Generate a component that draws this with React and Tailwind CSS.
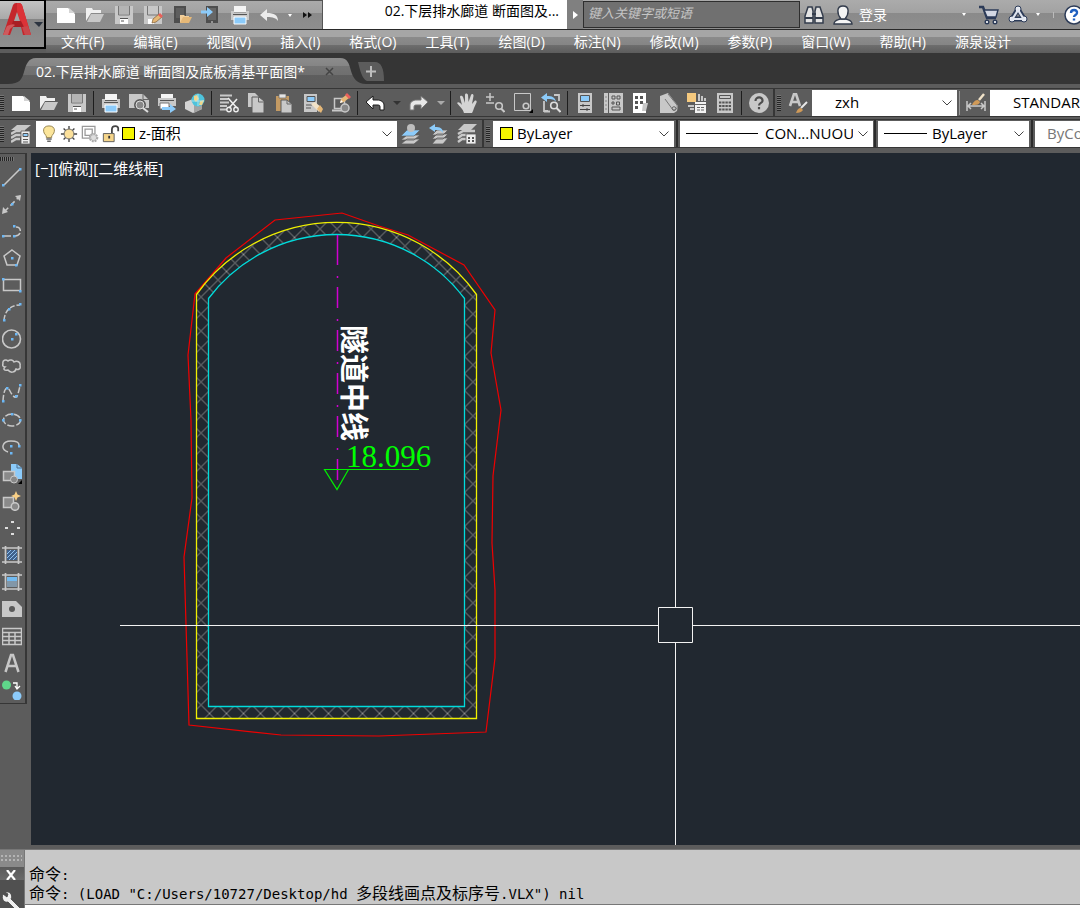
import React from 'react';

const GREY = '#c8c8c8';
const BLUE = '#8ccbfa';
const TAN = '#e6b877';

const menus = [
  '文件(F)', '编辑(E)', '视图(V)', '插入(I)', '格式(O)', '工具(T)', '绘图(D)',
  '标注(N)', '修改(M)', '参数(P)', '窗口(W)', '帮助(H)', '源泉设计',
];

/* ---------- icons, all on a 20 x 20 grid ---------- */

const icons = {
  newFile: (
    <>
      <path d="M1 3h11l7 6v9H1z" fill="#fff" />
      <path d="M13 3l6 5h-6z" fill="#d4d4d4" />
    </>
  ),
  open: (
    <>
      <path d="M1 16V3h6l1 2h8v3H6z" fill="#f0f0f0" />
      <path d="M2 17l4-8h13l-4 8z" fill={GREY} />
    </>
  ),
  save: (
    <>
      <path d="M1 1h18v18H1z" fill={GREY} />
      <path d="M5 1h10v8H5z" fill="#b4b4b4" />
      <path d="M4.500 1v9h11V1" stroke="#777" />
      <path d="M6 14h8v5H6z" fill="#fff" />
      <path d="M6 13.500h8M7 16h3" stroke="#555" />
    </>
  ),
  saveAs: (
    <>
      <path d="M1 1h18v18H1z" fill={GREY} />
      <path d="M4.500 1v9h11V1" stroke="#777" />
      <path d="M5 14h6v5H5z" fill="#fff" />
      <path d="M9 18l1-4 6-5 3 3-6 5z" fill={TAN} stroke="#805c30" strokeWidth=".7" />
      <path d="M15 10l2-2 3 3-2 2z" fill="#e8605c" />
    </>
  ),
  bookOpen: (
    <>
      <path d="M2 1h12v17H2z" fill="#4e4e4e" />
      <path d="M4 3h8v10H4z" fill="#5e5e5e" />
      <path d="M8 18V10h4l1 1h4v2z" fill="#f3cf9a" />
      <path d="M8 18l3-6h9l-3 6z" fill={TAN} />
    </>
  ),
  tablet: (
    <>
      <path d="M5 1h12v17H5z" fill="#4e4e4e" />
      <path d="M7 3h8v12H7z" fill="#666" />
      <path d="M0 5.500h6V2l6 5-6 5V8.500H0z" fill={BLUE} />
      <path d="M10 17h2" stroke="#ddd" />
    </>
  ),
  print: (
    <>
      <path d="M4 1h12v6H4z" fill="#f4f4f4" />
      <path d="M1 6h3v2h12V6h3v9H1z" fill={GREY} />
      <path d="M3 9.500h14" stroke="#555" />
      <path d="M4 12h12v7H4z" fill={BLUE} stroke="#fff" />
    </>
  ),
  undoBar: <path d="M1 10l7-6v4c7 0 11 2 11 8-2-3-5-4-11-4v4z" fill="#ececec" />,
  preview: (
    <>
      <path d="M0 1h14l6 6v8H0z" fill={GREY} />
      <path d="M14 1v5.500h6" stroke="#666" />
      <circle cx="11" cy="12" r="5" fill="#888" stroke="#5a5a5a" strokeWidth="2" />
      <circle cx="11" cy="12" r="4" stroke="#ddd" />
      <path d="M14 15l5 4" stroke="#ddd" strokeWidth="2" />
    </>
  ),
  publish: (
    <>
      <path d="M4 1h12v4H4z" fill="#f4f4f4" />
      <path d="M1 5h18v8H1z" fill={GREY} />
      <path d="M3 7.500h14" stroke="#555" />
      <path d="M3 10h9v6H3z" fill="#fff" stroke="#777" />
      <path d="M5 14h8v-3l6 5-6 4v-3H5z" fill={BLUE} />
    </>
  ),
  globe: (
    <>
      <path d="M0 9l8-3 9 5v5l-9 4-8-4z" fill="#d4d4d4" />
      <path d="M9 11l8-2v7l-8 4z" fill="#a2a2a2" />
      <circle cx="13" cy="7" r="6.500" fill="#4ec3dc" />
      <path d="M9 3l3-1 2 4-3 3-2-2zM15 8l4-1-2 5-3 0z" fill="#f0d58a" />
      <path d="M7 8h12M13 1v12" stroke="#bdeaf2" strokeWidth=".8" />
    </>
  ),
  cut: (
    <>
      <path d="M1 2.500h12M1 6h8M1 9.500h9M1 13h7M1 16.500h7" stroke={GREY} strokeWidth="2" />
      <path d="M9 5l9 10M18 6l-8 9" stroke="#eee" strokeWidth="1.600" />
      <circle cx="10" cy="16.500" r="2.200" stroke="#eee" strokeWidth="1.400" />
      <circle cx="17" cy="16.500" r="2.200" stroke="#eee" strokeWidth="1.400" />
    </>
  ),
  copy: (
    <>
      <path d="M1 0h7l4 4v10H1z" fill={GREY} />
      <path d="M5 4h7l5 4v12H5z" fill={GREY} stroke="#5a5a5a" />
      <path d="M11.500 4v5h5" stroke="#666" />
    </>
  ),
  paste: (
    <>
      <path d="M1 3h13v15H1z" fill="#c39a63" />
      <path d="M4 1h7v4H4z" fill="#e4e4e4" stroke="#666" strokeWidth=".7" />
      <path d="M6 7h6l5 4v9H6z" fill={GREY} stroke="#5a5a5a" />
      <path d="M12 7v4h4" stroke="#666" />
    </>
  ),
  match: (
    <>
      <path d="M1 1h13v18H1z" fill={GREY} />
      <path d="M4 3.500h8v5H4z" fill={BLUE} stroke="#555" />
      <path d="M3 12h6M3 15h5" stroke="#555" />
      <path d="M8 11l4-2 7 6-3 4z" fill="#f1e2c8" />
      <path d="M14 16l3-4 3 4-2 4z" fill={TAN} />
    </>
  ),
  blockEdit: (
    <>
      <path d="M3.500 5.500h10v10h-10z" stroke={GREY} strokeWidth="1.500" />
      <path d="M1 17.500h12" stroke={GREY} strokeWidth="2" />
      <circle cx="14" cy="15" r="4" fill="#888" stroke={GREY} strokeWidth="1.500" />
      <path d="M9 10l1-4 5-4 3 3-5 4z" fill={TAN} />
      <path d="M14 2l2-2 4 4-2 2z" fill="#e8605c" />
      <path d="M9 10l1-3 2 2z" fill="#fff" />
    </>
  ),
  undo: <path d="M1 9l7-6v4h4c4 0 7 2 7 5v5h-4v-3c0-2-1-2-3-2H8v4z" fill="#fff" stroke="#1c1c1c" />,
  redo: <path d="M19 9l-7-6v4H8c-4 0-7 2-7 5v5h4v-3c0-2 1-2 3-2h4v4z" fill="#e8e8e8" stroke="#777" />,
  hand: (
    <path
      d="M7 20c-1-4-4-6-7-10 1-1.500 3-1 5 2L3 4c0-1.500 2-2 3 0l2 6V2c0-2 2.500-2 3 0l.5 7L14 2c.6-1.600 2.800-1 2.500 1L15 11l2.500-3c1-1 2.800 0 2 1.500L17 15c-.5 2-1 3-2 5z"
      fill="#d4d4d4"
    />
  ),
  zoomRt: (
    <>
      <path d="M5 0v8M1 4h8M1 10h8" stroke={GREY} strokeWidth="1.500" />
      <circle cx="14" cy="13" r="3.300" stroke={GREY} strokeWidth="1.600" />
      <path d="M16 15.500l3.500 3.500" stroke={GREY} strokeWidth="2" />
    </>
  ),
  zoomWin: (
    <>
      <path d="M1.500.5h16v17h-16z" stroke={GREY} />
      <circle cx="13" cy="13" r="2.800" fill="#5a5a5a" stroke={GREY} strokeWidth="1.600" />
      <path d="M20 16v4h-4z" fill="#000" />
    </>
  ),
  zoomPrev: (
    <>
      <path d="M3 8v10h4M13 2h5v6M3 18.500h6" stroke={GREY} strokeWidth="1.800" />
      <path d="M0 4.500L6 0v3c5 0 8 1 9 6-2-3-4-3-9-3v3z" fill={BLUE} />
      <circle cx="13" cy="12.500" r="3.300" stroke="#ddd" strokeWidth="1.600" />
      <path d="M15.500 15l4 4" stroke="#ddd" strokeWidth="2" />
    </>
  ),
  props: (
    <>
      <path d="M3 0h14v20H3z" fill={GREY} />
      <path d="M5.500 2.500h9v6h-9z" fill={BLUE} stroke="#555" />
      <path d="M5 12.500h10M5 16.500h10M8 11v3M12 15v3" stroke="#444" />
    </>
  ),
  design: (
    <>
      <path d="M1 0h4v20H1zM6 0h14v20H6z" fill={GREY} />
      <path d="M9 3h3v3H9zM14 3h3v3h-3zM9 9h2v2H9zM13.500 9h3v3h-3zM9 14h8v3H9z" stroke="#555" />
      <path d="M3 3v14" stroke="#888" strokeDasharray="2 2" />
    </>
  ),
  palette: (
    <>
      <path d="M2 0h13v20H2z" fill="#fff" />
      <path d="M4 3h3v3H4zM9 3h3v3H9zM4 8h3v3H4zM9 8h3v3H9zM4 13h3v3H4z" fill="#555" />
      <path d="M11 18l1-8h5l-2 8z" fill={GREY} />
    </>
  ),
  sheets: (
    <>
      <path d="M1 3l8-3 10 13-1 5-3 2H1z" fill={GREY} />
      <path d="M9 1l9 11c1 3-1 6-4 5L6 6" stroke="#777" />
      <circle cx="15" cy="15.500" r="1.800" stroke="#666" />
    </>
  ),
  markup: (
    <>
      <path d="M0 0h9v9H0z" fill="#f5c97e" />
      <path d="M12 8V1M15 8V3M18 8V5" stroke={GREY} strokeWidth="2" />
      <path d="M1 13h6M3 16h4" stroke={GREY} strokeWidth="2" />
      <path d="M8 9h11v11H8z" fill="#f2f2f2" />
      <path d="M8 11.500h11M10 14.500h3M14 14.500h3M10 17h3M14 17h3" stroke="#666" />
    </>
  ),
  calc: (
    <>
      <path d="M2 0h16v20H2z" fill={GREY} />
      <path d="M4.500 2.500h11v3h-11z" stroke="#555" />
      <path d="M4 9.500h12M4 13h12M4 16.500h12" stroke="#555" strokeWidth="2" strokeDasharray="2.400 .8" />
    </>
  ),
  help: (
    <>
      <circle cx="10" cy="10" r="10" fill={GREY} />
      <path d="M6.500 8c0-5 7.500-4.500 7 0-.2 2-3.500 2-3.500 4.500M10 14v2.200" stroke="#4e4e4e" strokeWidth="2.200" />
    </>
  ),
  textStyle: (
    <>
      <path d="M2 13L6 1h2l4 12M3.500 9h7" stroke={GREY} strokeWidth="2.600" />
      <path d="M13 15l6-6" stroke="#e8e8e8" strokeWidth="2" />
      <path d="M8 20c1-3 2-5 5-5l2 2c-1 2-4 3-7 3z" fill="#d09a58" />
    </>
  ),
  dimStyle: (
    <>
      <path d="M1 8v10M19 8v10M2 13h16M5 10l-3 3 3 3M15 10l3 3-3 3" stroke={GREY} strokeWidth="1.500" />
      <path d="M13 7l5-6" stroke="#f0e2c8" strokeWidth="2.500" />
      <path d="M6 12c1-3 3-5 6-5l2 2c-1 3-4 3-8 3z" fill="#d09a58" />
    </>
  ),
  layerProps: (
    <>
      <path d="M6 1h14l-6 5H0z" fill={GREY} />
      <path d="M0 10l5-3h9M0 14l5-3h5M0 18l5-3h4" stroke={GREY} strokeWidth="2.400" />
      <path d="M10 7h9v13h-9z" fill="#eee" stroke="#5c5c5c" strokeWidth=".8" />
      <path d="M12 9.500h5v3h-5z" fill={BLUE} stroke="#555" />
      <path d="M12 15.500h5M12 18h5" stroke="#555" />
    </>
  ),
  layerCur: (
    <>
      <path d="M6 11h13l-6 5H0zM6 15h13l-6 5H0z" fill={GREY} stroke="#5a5a5a" strokeWidth=".8" />
      <path d="M6 6h13l-6 6H0z" fill={BLUE} stroke="#5a5a5a" strokeWidth=".6" />
      <circle cx="10" cy="4" r="4" fill="#bdbdbd" />
    </>
  ),
  layerPrev: (
    <>
      <path d="M8 6h11l-5 5H3zM8 10h11l-5 5H3zM8 14h11l-5 6H3z" fill={GREY} stroke="#5a5a5a" strokeWidth=".8" />
      <path d="M0 4l6-4v3c5 0 8 1 8 6-2-3-4-3-8-3v2z" fill={BLUE} />
    </>
  ),
  layerState: (
    <>
      <path d="M7 0h13l-6 6H1z" fill={GREY} />
      <path d="M1 10l5-3h12M1 14l4-3h6M1 18l4-3h4" stroke={GREY} strokeWidth="2.400" />
      <path d="M9 10h10v10H9z" fill="#eee" stroke="#5c5c5c" strokeWidth=".8" />
      <path d="M11 14h2M15 14h2M11 17h2M15 17h2" stroke="#555" strokeWidth="2" />
    </>
  ),
  bulb: (
    <>
      <path d="M10 1c8 0 7 8 3 11v2H7v-2C3 9 2 1 10 1z" fill="#fbe59b" stroke="#8d7a45" />
      <path d="M7 15.500h6M8 18h4" stroke="#666" strokeWidth="1.800" />
    </>
  ),
  sun: (
    <>
      <path d="M10 1v18M1 10h18M4 4l12 12M16 4L4 16" stroke="#444" strokeWidth="1.500" />
      <circle cx="10" cy="10" r="5.500" fill="#fbe09b" stroke="#666" />
    </>
  ),
  vpFreeze: (
    <>
      <path d="M1.500 1.500h14v13h-14zM4.500 4.500h8v7h-8z" stroke="#999" strokeWidth="1.400" />
      <circle cx="14" cy="14" r="4" fill="#ddd" stroke="#aaa" strokeWidth="2.500" strokeDasharray="2 1" />
    </>
  ),
  lock: (
    <>
      <path d="M11 9V5c0-5 8-5 7 0v2" stroke="#444" strokeWidth="2" />
      <path d="M1.500 9.500h12v9h-12z" fill="#f5d58a" stroke="#555" />
      <path d="M8 12v3" stroke="#333" strokeWidth="2" />
    </>
  ),
  binoculars: (
    <>
      <path d="M4 2h4l1 4v12H1v-7zM12 2h4l3 9v7h-8V6z" fill="#e4e4e4" stroke="#333c4c" strokeWidth="1.500" />
      <path d="M8 9h4M1 13h8M11 13h8" stroke="#333c4c" strokeWidth="1.800" />
    </>
  ),
  user: (
    <>
      <path d="M1 19c0-4 4-4 6-5h6c2 1 6 1 6 5z" fill="#f4f4f4" stroke="#333c4c" strokeWidth="1.400" />
      <path d="M10 1c7 0 6 8 2 13h-4C4 9 3 1 10 1z" fill="#f4f4f4" stroke="#333c4c" strokeWidth="1.400" />
    </>
  ),
  cart: (
    <>
      <path d="M0 2h4l4 11h9" stroke="#2c3b58" strokeWidth="2.500" />
      <path d="M5 5h14l-2 7H8z" fill="#d4d8e4" stroke="#2c3b58" strokeWidth="1.400" />
      <circle cx="8" cy="17" r="1.800" fill="#fff" stroke="#2c3b58" strokeWidth="1.400" />
      <circle cx="16" cy="17" r="1.800" fill="#fff" stroke="#2c3b58" strokeWidth="1.400" />
    </>
  ),
  triangle: (
    <>
      <path d="M10 4l6 10H4z" stroke="#2c3b58" strokeWidth="5" strokeLinejoin="round" />
      <circle cx="10" cy="4" r="3" fill="#e8ebf2" stroke="#2c3b58" />
      <circle cx="4" cy="14" r="3" fill="#e8ebf2" stroke="#2c3b58" />
      <circle cx="16" cy="14" r="3" fill="#e8ebf2" stroke="#2c3b58" />
      <path d="M10 5l5.500 9h-11z" stroke="#dfe4ee" strokeWidth="2.200" />
    </>
  ),
  helpBlue: (
    <>
      <circle cx="10" cy="10" r="9" fill="#fff" stroke="#2d3c58" strokeWidth="1.500" />
      <path d="M7 8c0-4 6.500-4 6 0-.2 2-3 2-3 4M10 13.500v2" stroke="#1f5fc0" strokeWidth="2.400" />
    </>
  ),
  wrench: (
    <path
      d="M2 2l4 3 1-3-3-2c5-1 8 3 6 7l9 9-3 3-9-9C3 11 0 7 2 2z"
      fill="#f0f0f0"
      stroke="#444"
      strokeWidth=".8"
    />
  ),
};

// little blue grip squares that mark the pick points of a draw tool
const Dots = ({ at }) => at.map(([x, y]) => (
  <rect key={`${x}-${y}`} x={x - 1} y={y - 1} width="2.500" height="2.500" fill="#6db8f5" />
));

const drawTools = [
  ['直线', <><path d="M2 18L18 2" stroke={GREY} strokeWidth="1.600" /><Dots at={[[1, 18], [18, 2]]} /></>],
  ['构造线', <><path d="M2 18L18 2" stroke={GREY} strokeWidth="1.500" strokeDasharray="6 3" /><path d="M0 20l1-7 5 5zM19 1l-1 6-5-5z" fill={GREY} /><Dots at={[[10, 10]]} /></>],
  ['多段线', <><path d="M1 15h12c7 0 7-9 1-9" stroke={GREY} strokeWidth="1.500" strokeDasharray="8 2" /><Dots at={[[1, 15], [12, 15], [12, 5]]} /></>],
  ['多边形', <><path d="M10 2l8 6-3 9H5L2 8z" stroke={GREY} strokeWidth="1.500" /><Dots at={[[10, 10], [14, 17]]} /></>],
  ['矩形', <><path d="M1.500 4.500h17v11h-17z" stroke={GREY} strokeWidth="1.500" /><Dots at={[[1, 4], [18, 16]]} /></>],
  ['圆弧', <><path d="M2 18C3 9 8 3 18 3" stroke={GREY} strokeWidth="1.500" strokeDasharray="5 2" /><Dots at={[[2, 18], [7, 7], [18, 2]]} /></>],
  ['圆', <><circle cx="9.500" cy="10" r="9" stroke={GREY} strokeWidth="1.600" /><Dots at={[[10, 10], [14, 5]]} /></>],
  ['修订云线', <path d="M1 8c-1-4 3-5 5-3 2-2 5-1 6 1 3-2 7 0 6 4 1 3-2 4-4 3-1 4-6 4-8 1-4 1-5-1-3-3-2 0-3-2-2-3z" stroke={GREY} strokeWidth="1.500" />],
  ['样条曲线', <><path d="M1 18C2 2 6 4 8 8s6 10 8 3l2-8" stroke={GREY} strokeWidth="1.500" strokeDasharray="6 2" /><Dots at={[[1, 18], [5, 5], [14, 13], [18, 2]]} /></>],
  ['椭圆', <><ellipse cx="10" cy="10" rx="8.500" ry="6" stroke={GREY} strokeWidth="1.500" strokeDasharray="7 2" /><Dots at={[[1, 10], [10, 4], [18, 10]]} /></>],
  ['椭圆弧', <><path d="M6 15C-2 12 0 4 9 4c6 0 8 2 8 4" stroke={GREY} strokeWidth="1.500" /><Dots at={[[9, 9], [17, 9], [9, 16]]} /></>],
  ['插入块', <><path d="M9 0h6l5 4v11H9z" fill={BLUE} /><path d="M15 0v4h5" stroke="#4a6f90" /><path d="M1.500 7.500h11v9h-11z" fill="#8a8a8a" stroke={GREY} strokeWidth="1.500" /><circle cx="12" cy="15.500" r="3.500" fill="#888" stroke={GREY} /><path d="M20 16v4h-4z" fill="#000" /></>],
  ['创建块', <><path d="M1.500 6.500h10v10h-10z" fill="#8a8a8a" stroke={GREY} strokeWidth="1.500" /><circle cx="13" cy="15.500" r="3.800" fill="#888" stroke={GREY} strokeWidth="1.500" /><path d="M14 0l1.500 3.500L19 5l-3.500 1.500L14 10l-1.500-3.500L9 5l3.500-1.500z" fill="#f8cf86" /></>],
  ['点', <path d="M9 3h3v2H9zM3 9h3v2H3zM15 9h3v2h-3zM9 15h3v2H9z" fill="#dedede" />],
  ['图案填充', <><path d="M5 5h10v10H5z" fill="#3f618c" /><path d="M5 9l4-4M5 13l8-8M7 15l8-8M11 15l4-4" stroke="#8fc0ee" /><path d="M3.500 1v18M16.500 1v18M0 3h20M0 17h20" stroke={GREY} strokeWidth="1.700" /></>],
  ['渐变色', <><path d="M5 5h10v5H5z" fill="#72baf0" /><path d="M5 9h10v6H5z" fill="#8297a8" /><path d="M3.500 1v18M16.500 1v18M0 3h20M0 17h20" stroke={GREY} strokeWidth="1.700" /></>],
  ['面域', <><path d="M0 2h14l6 6v10H0z" fill={GREY} /><circle cx="10" cy="10" r="3" fill="#5a5a5a" /></>],
  ['表格', <><path d="M.5 2.500h19v16H.5z" stroke={GREY} strokeWidth="1.500" /><path d="M0 6.500h20M0 10.500h20M0 14.500h20M7 7v12M13 7v12" stroke={GREY} strokeWidth="1.500" /></>],
  ['多行文字', <path d="M3.500 19L9 2h2l5.500 17M6 13h8" stroke={GREY} strokeWidth="2.500" />],
  ['添加选定对象', <><circle cx="4.500" cy="5" r="4.500" fill="#5fd68a" /><circle cx="15" cy="16" r="4.500" fill={BLUE} /><path d="M11 3h4v5M13 6l2 3 3-3" stroke="#fff" strokeWidth="1.300" /></>],
];

const Icon = ({ name, children, className = 'w-5 h-5' }) => (
  <svg viewBox="0 0 20 20" fill="none" aria-hidden="true" className={`${className} shrink-0`}>
    {name ? icons[name] : children}
  </svg>
);

const ToolButton = ({ name, label }) => (
  <button type="button" aria-label={label} className="w-7 h-full shrink-0 flex items-center justify-center hover:bg-white/10">
    <Icon name={name} />
  </button>
);

const Sep = () => <div className="w-px h-6 mx-[2px] mr-[3px] shrink-0 bg-[#1d1d1d]" />;

const Caret = ({ dark, label }) => (
  <button type="button" aria-label={label} className="w-4 h-full shrink-0 flex items-center justify-center">
    <svg viewBox="0 0 8 4" className="w-2 h-1"><path d="M0 0h8L4 4z" fill={dark ? '#333' : '#aaa'} /></svg>
  </button>
);

const Grip = () => (
  <div className="w-1 h-4 shrink-0 bg-[repeating-linear-gradient(0deg,#242424_0,#242424_1px,#757575_1px,#757575_2px)]" />
);

const Combo = ({ label, value, className, selectClass = '', children }) => (
  <div className={`flex items-center h-[26px] shrink-0 bg-white text-black relative overflow-hidden ${className}`}>
    {children}
    <select aria-label={label} className={`appearance-none flex-1 min-w-0 h-full bg-transparent pr-5 text-[15px] outline-none ${selectClass}`}>
      <option>{value}</option>
    </select>
    <svg viewBox="0 0 10 6" className="absolute right-[5px] top-[10px] w-[10px] h-[6px] pointer-events-none">
      <path d="M.5.5L5 5 9.500.5" fill="none" stroke="#444" />
    </svg>
  </div>
);

function AppButton() {
  return (
    <button
      type="button"
      aria-label="应用程序菜单"
      className="w-[46px] h-[49px] shrink-0 relative border-t border-r-2 border-b-2 border-black bg-[linear-gradient(#c4c4c4_0,#a8a8a8_40%,#858585_40%,#8f8f8f_100%)]"
    >
      <svg viewBox="0 0 44 46" className="w-full h-full">
        <path d="M13 4q1-2 3-2h3q2 0 3 2l9 30h-8l-2-8h-8l-3 8H3z" fill="#c4262c" />
        <path d="M17 2h2q2 0 3 2l9 30h-6L17 10z" fill="#dc3237" />
        <path d="M17 11l3 9h-6z" fill="#a6a6a6" />
        <path d="M13 20h8l3 6H11z" fill="#a81e24" />
        <path d="M3 34l4-9q6-3 8-1l-5 4-2 6z" fill="#cf5a5d" />
        <path d="M31 34l-3-9-6 1 3 8z" fill="#c9474b" />
        <path d="M34 21h9l-4 5z" fill="#2c3440" />
      </svg>
    </button>
  );
}

function TitleBar() {
  const quick = [
    ['newFile', '新建'], ['open', '打开'], ['save', '保存'], ['saveAs', '另存为'],
    ['bookOpen', '从移动设备打开'], ['tablet', '保存到移动设备'], ['print', '打印'], ['undoBar', '放弃'],
  ];
  return (
    <div className="flex h-[29px] bg-[linear-gradient(#ababab_0,#a2a2a2_13px,#8a8a8a_13px,#8e8e8e_100%)]">
      <div className="w-[277px] shrink-0 flex items-center gap-[9px] pl-[10px] border-t border-r border-[#555]">
        {quick.map(([name, label]) => (
          <button key={name} type="button" aria-label={label}><Icon name={name} /></button>
        ))}
        <svg viewBox="0 0 4 3" className="w-1 h-[3px]"><path d="M0 0h4L2 3z" fill="#fff" /></svg>
        <svg viewBox="0 0 9 6" className="w-[9px] h-[6px] ml-[2px]"><path d="M0 0l4 3-4 3zM5 0l4 3-4 3z" fill="#111" /></svg>
      </div>
      <div className="w-[244px] shrink-0 bg-white text-black text-[14px] leading-[22px] text-right pr-2 whitespace-nowrap overflow-hidden">
        02.下层排水廊道 断面图及...
      </div>
      <button type="button" aria-label="展开搜索" className="w-4 shrink-0 flex items-center justify-center bg-[#808080]">
        <svg viewBox="0 0 5 8" className="w-[5px] h-2"><path d="M0 0l5 4-5 4z" fill="#fff" /></svg>
      </button>
      <input
        type="text"
        aria-label="搜索"
        placeholder="键入关键字或短语"
        className="w-[217px] h-[27px] mt-px shrink-0 px-1 pb-1 text-[13px] italic bg-[#707070] border border-[#2e2e2e] text-white placeholder:text-[#c4c4c4] outline-none"
      />
      <div className="flex-1 min-w-0 flex items-center overflow-hidden">
        <button type="button" aria-label="搜索按钮" className="ml-1"><Icon name="binoculars" /></button>
        <button type="button" className="ml-[9px] flex items-center gap-[6px] text-[14px] text-white whitespace-nowrap">
          <Icon name="user" />登录
        </button>
        <svg viewBox="0 0 4 3" className="w-1 h-[3px] ml-[75px] shrink-0"><path d="M0 0h4L2 3z" fill="#fff" /></svg>
        <button type="button" aria-label="商店" className="ml-[13px]"><Icon name="cart" /></button>
        <button type="button" aria-label="联机" className="ml-[9px]"><Icon name="triangle" /></button>
        <svg viewBox="0 0 4 3" className="w-1 h-[3px] ml-2 shrink-0"><path d="M0 0h4L2 3z" fill="#fff" /></svg>
        <div className="w-px h-[6px] ml-[13px] shrink-0 bg-[#bbb]" />
        <button type="button" aria-label="帮助" className="ml-[10px] shrink-0"><Icon name="helpBlue" /></button>
      </div>
    </div>
  );
}

function MenuBar() {
  return (
    <nav className="h-6 flex items-center gap-[29px] pl-[15px] border-t border-[#2a2a2a] text-[14px] text-white whitespace-nowrap overflow-hidden bg-[linear-gradient(#a6a6a6_0,#a6a6a6_7px,#8b8b8b_7px,#858585_15px,#6e6e6e_15px,#5c5c5c_100%)]">
      {menus.map((m) => <button key={m} type="button">{m}</button>)}
    </nav>
  );
}

const TabFill = ({ id }) => (
  <linearGradient id={id} x1="0" y1="0" x2="0" y2="26" gradientUnits="userSpaceOnUse">
    <stop offset="0" stopColor="#8c8c8c" />
    <stop offset=".3" stopColor="#858585" />
    <stop offset=".3" stopColor="#757575" />
    <stop offset=".65" stopColor="#6f6f6f" />
    <stop offset=".65" stopColor="#5e5e5e" />
    <stop offset="1" stopColor="#5c5c5c" />
  </linearGradient>
);

function FileTabs() {
  return (
    <div className="h-[31px] flex items-end bg-[#353535] pl-2 overflow-hidden">
      <svg viewBox="0 0 28 26" className="w-7 h-[26px] shrink-0">
        <defs><TabFill id="tabLeft" /></defs>
        <path d="M0 26C12 26 14 21 16 14S20 0 28 0v26z" fill="url(#tabLeft)" />
      </svg>
      <div className="h-[26px] w-[304px] shrink-0 flex items-center justify-between text-[14px] text-white whitespace-nowrap bg-[linear-gradient(#8c8c8c_0,#858585_30%,#757575_30%,#6f6f6f_65%,#5e5e5e_65%,#5c5c5c_100%)]">
        <span>02.下层排水廊道 断面图及底板清基平面图*</span>
        <button type="button" aria-label="关闭" className="mr-[6px]">
          <svg viewBox="0 0 9 9" className="w-[9px] h-[9px]"><path d="M1 1l7 7M8 1L1 8" stroke="#444" strokeWidth="1.500" /></svg>
        </button>
      </div>
      <svg viewBox="0 0 26 26" className="w-[26px] h-[26px] shrink-0">
        <defs><TabFill id="tabRight" /></defs>
        <path d="M0 0c8 0 9 6 11 13s6 13 15 13H0z" fill="url(#tabRight)" />
      </svg>
      <button type="button" aria-label="新图形" className="-ml-2 mb-[3px] shrink-0">
        <svg viewBox="0 0 26 19" className="w-[26px] h-[19px]">
          <path d="M0 0h17c6 0 9 6 9 19H9C4 17 2 8 0 0z" fill="#5c5c5c" />
          <path d="M13 4v11M8 9.500h10" stroke="#bdbdbd" strokeWidth="2" />
        </svg>
      </button>
    </div>
  );
}

function StandardToolbar() {
  return (
    <div className="h-[29px] flex items-center border-y border-[#363636] overflow-hidden">
      <Grip />
      <div className="w-[3px] shrink-0" />
      <ToolButton name="newFile" label="新建" />
      <ToolButton name="open" label="打开" />
      <ToolButton name="save" label="保存" />
      <Sep />
      <ToolButton name="print" label="打印" />
      <ToolButton name="preview" label="打印预览" />
      <ToolButton name="publish" label="发布" />
      <ToolButton name="globe" label="三维打印" />
      <Sep />
      <ToolButton name="cut" label="剪切" />
      <ToolButton name="copy" label="复制" />
      <ToolButton name="paste" label="粘贴" />
      <ToolButton name="match" label="特性匹配" />
      <ToolButton name="blockEdit" label="块编辑器" />
      <Sep />
      <ToolButton name="undo" label="放弃" />
      <Caret dark label="放弃列表" />
      <ToolButton name="redo" label="重做" />
      <Caret label="重做列表" />
      <div className="w-px h-6 ml-px mr-[2px] shrink-0 bg-[#1d1d1d]" />
      <ToolButton name="hand" label="实时平移" />
      <ToolButton name="zoomRt" label="实时缩放" />
      <ToolButton name="zoomWin" label="窗口缩放" />
      <ToolButton name="zoomPrev" label="缩放上一个" />
      <Sep />
      <ToolButton name="props" label="特性" />
      <ToolButton name="design" label="设计中心" />
      <ToolButton name="palette" label="工具选项板" />
      <ToolButton name="sheets" label="图纸集管理器" />
      <ToolButton name="markup" label="标记集管理器" />
      <ToolButton name="calc" label="快速计算器" />
      <Sep />
      <ToolButton name="help" label="帮助" />
      <div className="w-[2px] h-full mr-[2px] shrink-0 bg-[#363636]" />
      <Grip />
      <div className="w-[3px] shrink-0" />
      <ToolButton name="textStyle" label="文字样式" />
      <Combo label="文字样式控制" value="zxh" className="w-[145px]" selectClass="pl-[23px]" />
      <div className="w-px h-6 mx-[2px] shrink-0 bg-[#999]" />
      <ToolButton name="dimStyle" label="标注样式" />
      <Combo label="标注样式控制" value="STANDARD" className="w-[180px]" selectClass="pl-[23px]" />
    </div>
  );
}

function LayerToolbar() {
  return (
    <div className="h-[29px] mt-[2px] flex items-center border-y border-[#363636] overflow-hidden">
      <Grip />
      <div className="w-[3px] shrink-0" />
      <ToolButton name="layerProps" label="图层特性" />
      <Combo label="图层" value="z-面积" className="w-[361px] ml-px pl-1" selectClass="pl-1">
        <Icon name="bulb" className="w-[18px] h-[18px]" />
        <Icon name="sun" className="w-[18px] h-[18px] ml-[2px]" />
        <Icon name="vpFreeze" className="w-[18px] h-[18px] ml-[3px]" />
        <Icon name="lock" className="w-[18px] h-[18px] ml-[3px]" />
        <div className="w-[13px] h-[13px] ml-[2px] shrink-0 border border-black bg-[#f5f500]" />
      </Combo>
      <ToolButton name="layerCur" label="置为当前" />
      <ToolButton name="layerPrev" label="上一个图层" />
      <ToolButton name="layerState" label="图层状态" />
      <div className="w-[2px] h-full ml-px mr-[2px] shrink-0 bg-[#363636]" />
      <Grip />
      <Combo label="颜色" value="ByLayer" className="w-[181px] ml-[3px] pl-[7px]" selectClass="pl-1">
        <div className="w-[13px] h-[13px] shrink-0 border border-black bg-[#f5f500]" />
      </Combo>
      <div className="w-[2px] h-full mx-[2px] shrink-0 bg-[#2c2c2c]" />
      <Combo label="线型" value="CON...NUOUS" className="w-[193px] pl-[6px]" selectClass="pl-[7px]">
        <div className="w-[72px] h-px shrink-0 bg-black" />
      </Combo>
      <div className="w-[2px] h-full ml-px mr-[2px] shrink-0 bg-[#2c2c2c]" />
      <Combo label="线宽" value="ByLayer" className="w-[151px] pl-[6px]" selectClass="pl-[5px]">
        <div className="w-[43px] h-px shrink-0 bg-black" />
      </Combo>
      <div className="w-[2px] h-full mx-[2px] shrink-0 bg-[#2c2c2c]" />
      <Combo label="打印样式" value="ByColor" className="w-[140px]" selectClass="pl-3 text-[#777]" />
    </div>
  );
}

function DrawToolbar() {
  return (
    <div className="w-[27px] shrink-0 self-start pt-[9px] relative border-t border-r-2 border-b border-[#363636]">
      <div className="absolute left-0 top-[3px] w-[14px] h-1 bg-[repeating-linear-gradient(90deg,#242424_0,#242424_1px,#757575_1px,#757575_2px)]" />
      {drawTools.map(([label, art]) => (
        <button key={label} type="button" aria-label={label} className="block w-full h-[27px] pl-[2px] hover:bg-white/10">
          <Icon>{art}</Icon>
        </button>
      ))}
    </div>
  );
}

const OUTER = 'M196.5 718.5V294.5A172 172 0 0 1 476.5 294.5V718.5Z';
const INNER = 'M208.500 706.500V298.500A160 160 0 0 1 464.500 298.500V706.500Z';
const EXCAVATION = '195,294 226,258 275,220 342,213 379,226 408,235 464,265 495,310 491,353 501,410 493,476 492,543 495,590 495,658 486,732 379,736 281,735 189,725 184,557 192,498 191,420 188,355';

function Canvas() {
  return (
    <main className="flex-1 min-w-0 ml-1 mb-1 relative overflow-hidden bg-[#212830]">
      <svg className="absolute inset-0 w-full h-full" fill="none" role="img" aria-label="隧道断面图">
        <defs>
          <pattern id="hatch" x="192.500" y="594.500" width="17" height="17" patternUnits="userSpaceOnUse">
            <path d="M-1-1l19 19M18-1L-1 18" stroke="#8c8c8c" />
          </pattern>
        </defs>
        <g transform="translate(-31 -153)">
          <path d={OUTER + INNER} fill="url(#hatch)" fillRule="evenodd" />
          <polygon points={EXCAVATION} stroke="#f00000" strokeWidth="1.200" />
          <path d={OUTER} stroke="#f0f000" strokeWidth="1.300" />
          <path d={INNER} stroke="#00dcdc" strokeWidth="1.300" />

          {/* centre line */}
          <path d="M337.500 235v9" stroke="#d000d0" strokeWidth="1.500" />
          <path d="M337.500 244v246" stroke="#d000d0" strokeWidth="1.500" strokeDasharray="21 11 2 9" />
          <text
            transform="translate(343 325) rotate(90)"
            fill="#fff"
            className="text-[29px] font-bold [font-family:'Noto_Sans_CJK_SC',sans-serif]"
          >
            隧道中线
          </text>

          {/* elevation mark */}
          <path d="M419 469.500H324.500L337 489.500 348.500 469.500" stroke="#00f000" strokeWidth="1.200" />
          <text x="346" y="467" fill="#00ff00" className="text-[31px] [font-family:'Liberation_Serif',serif]">18.096</text>

          {/* crosshair */}
          <path d="M120 625.500H658M693 625.500H4000M675.500 0V607M675.500 643V4000" stroke="#f2f2f2" />
          <path d="M658.500 607.500h34v35h-34z" stroke="#f2f2f2" />
        </g>
      </svg>
      <div className="relative flex pl-1 pt-1 text-[15px] leading-[22px] text-white whitespace-nowrap">
        <button type="button">[−]</button>
        <button type="button">[俯视]</button>
        <button type="button">[二维线框]</button>
      </div>
    </main>
  );
}

const Cjk = ({ children }) => <span className="text-[16px]">{children}</span>;

function CommandLine() {
  return (
    <div className="h-[59px] shrink-0 flex border-t border-[#777] bg-[#c8c8c8] overflow-hidden">
      <div className="w-[25px] shrink-0 border-r border-[#777] bg-[linear-gradient(#8a8a8a_0,#8a8a8a_17px,#5a5a5a_17px,#6a6a6a_30px,#505050_30px)]">
        <svg viewBox="0 0 22 6" className="w-[22px] h-[6px] mt-[5px]">
          <path d="M1 1h21M1 5h21" stroke="#b4b4b4" strokeWidth="2" strokeDasharray="2 2" />
        </svg>
        <button type="button" aria-label="关闭命令行" className="block w-full mt-[9px]">
          <svg viewBox="0 0 10 10" className="w-[10px] h-[10px] ml-[6px]"><path d="M1 0l8 10M9 0L1 10" stroke="#fff" strokeWidth="2.200" /></svg>
        </button>
        <button type="button" aria-label="自定义" className="block mt-3 ml-px"><Icon name="wrench" /></button>
      </div>
      <div className="flex-1 min-w-0 flex flex-col">
        <div className="pt-[15px] h-[54px] shrink-0 pl-1 text-[14px] leading-[19px] text-black whitespace-pre [font-family:'DejaVu_Sans_Mono','Noto_Sans_CJK_SC',monospace]">
          <p className="h-[19px]"><Cjk>命令</Cjk>:</p>
          <p className="h-[19px]">
            <Cjk>命令</Cjk>{': (LOAD "C:/Users/10727/Desktop/hd '}<Cjk>多段线画点及标序号</Cjk>{'.VLX") nil'}
          </p>
        </div>
        <input type="text" aria-label="命令" className="w-full h-5 shrink-0 border-t border-[#777] bg-white outline-none" />
      </div>
    </div>
  );
}

export default function App() {
  return (
    <div className="h-screen flex flex-col overflow-hidden bg-[#5c5c5c] [font-family:'Open_Sans','Noto_Sans_CJK_SC',sans-serif]">
      <header className="shrink-0">
        <div className="flex h-[53px]">
          <AppButton />
          <div className="flex-1 min-w-0">
            <TitleBar />
            <MenuBar />
          </div>
        </div>
        <FileTabs />
        <div className="h-1" />
        <StandardToolbar />
        <LayerToolbar />
      </header>
      <div className="flex-1 min-h-0 flex mt-[5px]">
        <DrawToolbar />
        <Canvas />
      </div>
      <CommandLine />
    </div>
  );
}
